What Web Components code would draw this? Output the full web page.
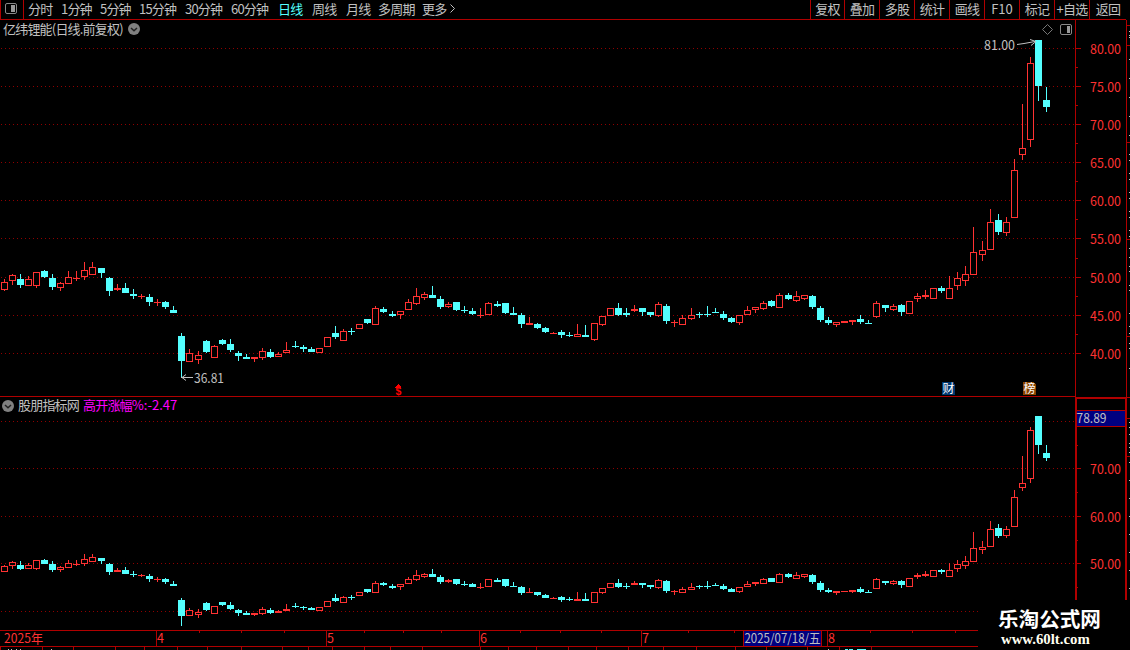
<!DOCTYPE html>
<html lang="zh-CN">
<head>
<meta charset="utf-8">
<title>亿纬锂能 日线</title>
<style>
html, body {
  margin: 0;
  background: #000;
}
body {
  --line: #b00000;
  --dots: #900000;
  --up: #ff3232;
  --down: #54ffff;
  --text: #c0c0c0;
  font: 400 13px/17px "Noto Sans CJK SC", "Liberation Sans", sans-serif;
  letter-spacing: -0.8px;
  color: var(--text);
  overflow: hidden;
}
</style>
</head>
<body>
<stock-terminal></stock-terminal>

<template id="terminal-template">
  <style>
    :host { display: flex; position: relative; width: 1130px; height: 650px; background: #000; }
    main { display: flex; flex-direction: column; width: 1127px; }
    .pane { display: flex; }
    .plot { position: relative; width: 1075px; }
    .number { letter-spacing: 0; }
    pane-title { position: absolute; left: 0; top: 0; }
    site-mark { position: absolute; right: 0; bottom: 0; }
  </style>
  <main>
    <tool-bar>
      <tool-tab style="width:33px">分时</tool-tab>
      <tool-tab style="width:39px">1分钟</tool-tab>
      <tool-tab style="width:39px">5分钟</tool-tab>
      <tool-tab style="width:46px">15分钟</tool-tab>
      <tool-tab style="width:46px">30分钟</tool-tab>
      <tool-tab style="width:47px">60分钟</tool-tab>
      <tool-tab style="width:34px" active>日线</tool-tab>
      <tool-tab style="width:34px">周线</tool-tab>
      <tool-tab style="width:32px">月线</tool-tab>
      <tool-tab style="width:44px">多周期</tool-tab>
      <tool-tab style="width:27px">更多</tool-tab>
      <tool-button slot="end" style="width:33px">复权</tool-button>
      <tool-button slot="end" style="width:34px">叠加</tool-button>
      <tool-button slot="end" style="width:34px">多股</tool-button>
      <tool-button slot="end" style="width:34px">统计</tool-button>
      <tool-button slot="end" style="width:34px">画线</tool-button>
      <tool-button slot="end" style="width:34px"><span class="number">F10</span></tool-button>
      <tool-button slot="end" style="width:34px">标记</tool-button>
      <tool-button slot="end" style="width:34px">+自选</tool-button>
      <tool-button slot="end" style="width:36px">返回</tool-button>
    </tool-bar>
    <div class="pane">
      <div class="plot">
        <candle-chart kind="main"></candle-chart>
        <pane-title><span>亿纬锂能(日线.前复权)</span><drop-dot></drop-dot></pane-title>
      </div>
      <price-axis kind="main"></price-axis>
    </div>
    <div class="pane">
      <div class="plot">
        <candle-chart kind="sub"></candle-chart>
        <pane-title sub><drop-dot></drop-dot><span>股朋指标网</span><span style="color:#ff00ff">高开涨幅<span class="number">%:-2.47</span></span></pane-title>
      </div>
      <price-axis kind="sub"></price-axis>
    </div>
    <time-axis></time-axis>
  </main>
  <side-ruler></side-ruler>
  <site-mark></site-mark>
</template>

<template id="toolbar-template">
  <style>
    :host { display: flex; box-sizing: border-box; height: 20px; width: 1126px; border-bottom: 1px solid var(--line); }
    .panel { box-sizing: border-box; width: 24px; border: solid var(--line); border-width: 0 1px; margin-right: 4px; }
    .end { display: flex; margin-left: auto; }
    svg { display: block; }
  </style>
  <div class="panel">
    <svg width="22" height="19" fill="none">
      <rect x="4.5" y="3.5" width="11" height="10" rx="1.5" stroke="#888"/>
      <rect x="10" y="5" width="4" height="7" fill="#999"/>
    </svg>
  </div>
  <slot></slot>
  <svg width="10" height="19" fill="none"><path d="M1.5 4.5L5.5 8.5L1.5 12.5" stroke="#c0c0c0"/></svg>
  <div class="end"><slot name="end"></slot></div>
</template>

<script>
const template = (id) => document.getElementById(id).content.cloneNode(true);

// Each row: direction, high, body top, body bottom, low (bottoms are exclusive)
const CANDLES = `
r 279 282 290 291|r 274 275 281 285|c 274 279 285 288|r 276 279 286 286|r 272 272 286 288
c 270 271 277 278|c 274 278 287 290|r 282 283 288 291|r 271 277 284 284|r 271 278 279 281
r 262 270 277 280|r 262 267 275 275|c 268 268 273 278|c 277 278 291 296|r 284 288 290 291
c 283 288 293 293|c 289 294 296 299|r 294 296 297 299|c 294 297 302 306|r 299 302 303 306
c 301 302 307 309|c 306 310 313 313|c 333 336 361 378|r 349 353 362 362|r 351 355 360 364
c 340 341 352 353|r 345 346 358 358|c 339 340 344 345|c 339 344 350 352|c 351 353 356 361
c 354 357 359 359|r 357 357 359 362|r 348 351 358 360|c 349 352 357 358|r 352 354 357 357
r 342 350 353 353|c 341 346 347 348|c 345 347 349 352|c 347 349 352 352|r 348 348 353 353
r 337 337 347 347|c 326 333 337 339|r 329 331 341 341|c 328 331 332 335|r 324 324 329 329
c 319 319 323 324|r 306 308 325 325|c 307 309 312 313|c 311 314 316 317|r 311 311 315 319
r 299 302 310 310|r 288 296 304 305|r 292 294 298 300|c 286 295 298 298|c 296 299 307 309
r 302 304 307 308|c 302 302 310 311|c 306 310 311 313|c 308 311 314 315|r 308 315 316 318
r 302 303 315 315|c 301 304 306 307|c 303 303 313 314|c 307 313 315 315|c 313 315 324 328
r 317 323 325 325|c 323 324 328 329|c 327 328 332 333|r 332 333 334 334|c 330 332 335 338
c 332 335 336 337|r 324 334 337 337|c 325 335 337 337|r 323 323 340 341|r 316 316 325 326
r 308 308 316 316|c 303 308 315 316|c 308 313 315 317|r 305 309 311 312|c 308 308 312 316
c 312 312 315 317|r 302 304 316 317|c 304 306 321 324|r 320 322 323 327|r 315 318 325 325
r 308 315 319 320|c 312 314 315 318|c 306 314 315 317|c 308 312 313 313|c 311 314 318 320
c 317 318 322 323|r 315 315 323 325|r 306 310 315 315|r 307 307 310 313|r 301 303 309 310
c 300 301 306 307|r 293 295 308 308|c 293 295 299 300|r 291 296 301 302|r 295 295 299 300
c 295 296 307 309|c 306 308 320 322|c 317 320 323 325|r 322 322 325 327|r 321 321 323 323
r 320 320 322 325|c 315 319 322 324|c 320 323 324 324|r 301 303 317 318|c 305 305 308 312
r 304 306 310 311|c 304 305 312 316|r 301 301 314 314|r 293 296 299 302|r 290 295 297 299
r 288 288 299 299|c 286 288 291 293|r 276 288 299 299|r 272 278 286 290|r 266 274 281 286
r 227 252 275 275|r 241 250 255 261|r 209 222 250 250|c 214 220 232 235|r 217 222 233 236
r 159 170 218 218|r 104 148 155 160|r 57 63 140 147|c 40 40 86 101|c 87 100 107 112
`.trim().split(/[|\n]/).map((row) => {
  const [dir, ...levels] = row.split(" ");
  return [dir, ...levels.map(Number)];
});

const rect = (x, y, w, h, fill) => `<rect x="${x}" y="${y}" width="${w}" height="${h}" fill="${fill}"/>`;
const label = (x, y, w, text, fill) =>
  `<text x="${x}" y="${y}" textLength="${w}" lengthAdjust="spacingAndGlyphs" fill="${fill}">${text}</text>`;

const PANES = {
  main: {
    top: 20, height: 377,
    grid: [48, 86, 124, 162, 200, 238, 277, 315, 353],
    minor: [67, 105, 143, 181, 219, 258, 296, 334],
    labels: ["80.00", "75.00", "70.00", "65.00", "60.00", "55.00", "50.00", "45.00", "40.00"],
    scale: (y) => y,
  },
  sub: {
    top: 397, height: 233,
    grid: [421, 468, 516, 563, 611],
    minor: [445, 492, 540, 587],
    labels: ["", "70.00", "60.00", "50.00"],
    scale: (y) => Math.round(421 + (y - 48) * 0.6213),
  },
};

const SVG_STYLE = `
  :host { display: block; }
  svg { display: block; overflow: visible; shape-rendering: crispEdges; }
  text { font-size: 12.6px; letter-spacing: 0; }
`;

class StockTerminal extends HTMLElement {
  constructor() {
    super();
    this.attachShadow({ mode: "open" });
    this.shadowRoot.appendChild(template("terminal-template"));
  }
}

class ToolBar extends HTMLElement {
  constructor() {
    super();
    this.attachShadow({ mode: "open" });
    this.shadowRoot.appendChild(template("toolbar-template"));
  }
}

class ToolTab extends HTMLElement {
  constructor() {
    super();
    this.attachShadow({ mode: "open" }).innerHTML = `
      <style>
        :host { display: block; white-space: nowrap; }
        :host([active]) { color: var(--down); }
      </style>
      <slot></slot>`;
  }
}

class ToolButton extends HTMLElement {
  constructor() {
    super();
    this.attachShadow({ mode: "open" }).innerHTML = `
      <style>
        :host { display: block; height: 19px; border-left: 1px solid var(--line); text-align: center; white-space: nowrap; }
      </style>
      <slot></slot>`;
  }
}

class DropDot extends HTMLElement {
  constructor() {
    super();
    this.attachShadow({ mode: "open" }).innerHTML = `
      <style>:host, svg { display: block; }</style>
      <svg width="12" height="12" fill="none">
        <circle cx="6" cy="6" r="6" fill="#808080"/>
        <path d="M3 5L6 7.7L9 5" stroke="#202020" stroke-width="1.5"/>
      </svg>`;
  }
}

class PaneTitle extends HTMLElement {
  constructor() {
    super();
    this.attachShadow({ mode: "open" }).innerHTML = `
      <style>
        :host { display: flex; align-items: center; gap: 5px; height: 18px; padding-left: 3px; white-space: nowrap; }
        :host([sub]) { gap: 4px; height: 17px; padding-left: 2px; }
        ::slotted(span) { margin-top: -2px; }
      </style>
      <slot></slot>`;
  }
}

class CandleChart extends HTMLElement {
  connectedCallback() {
    const kind = this.getAttribute("kind");
    const pane = PANES[kind];
    this.attachShadow({ mode: "open" }).innerHTML = `
      <style>${SVG_STYLE}</style>
      <svg width="1075" height="${pane.height}" viewBox="0 ${pane.top} 1075 ${pane.height}">
        ${pane.grid.map((y) => `<path d="M1 ${y + 0.5}H1075" stroke="var(--dots)" stroke-dasharray="1 3"/>`).join("")}
        ${CANDLES.map((candle, i) => this.drawCandle(candle, i, pane.scale)).join("")}
        ${kind === "main" ? this.drawMarks() : ""}
      </svg>`;
  }

  drawCandle([dir, high, top, bottom, low], i, scale) {
    const x = 1 + 8 * i + Math.floor(0.0822 * i + 0.06);
    const h = scale(high);
    const t = scale(top);
    const b = scale(bottom - 1) + 1;
    const l = scale(low - 1) + 1;
    const color = dir === "r" ? "var(--up)" : "var(--down)";
    let out = rect(x + 3, h, 1, t - h, color) + rect(x + 3, b, 1, l - b, color);
    if (dir === "r" && b - t > 2) {
      out += rect(x, t, 7, b - t, color) + rect(x + 1, t + 1, 5, b - t - 2, "#000");
    } else {
      out += rect(x, t, 7, b - t, color);
    }
    return out;
  }

  drawMarks() {
    return `
      ${rect(0, 396, 1075, 1, "var(--line)")}
      <g fill="none" stroke="#c0c0c0" shape-rendering="auto">
        <path d="M1017 44.5L1024 43.5L1035 41.5M1030 39.5L1036 41.5L1031 45.5"/>
        <path d="M181 377.5H193M186 374.5L182 377.5L186 380.5"/>
        <path d="M1047.5 24.5L1052.5 29.5L1047.5 34.5L1042.5 29.5Z" stroke="#777"/>
        <rect x="1060.5" y="24.5" width="11" height="10" rx="1.5" stroke="#888"/>
      </g>
      ${rect(1067, 26, 3, 7, "#999")}
      ${label(984, 50, 31, "81.00", "var(--text)")}
      ${label(194, 383, 30, "36.81", "var(--text)")}
      <path d="M395.5 387.5L398.5 384L401.5 387.5Z" fill="#f00"/>
      <text x="395.5" y="395" fill="#f00" style="font:bold 10.5px 'Liberation Sans',sans-serif">$</text>
      ${rect(942, 382, 12, 13, "#003870")}${rect(954, 384, 1, 11, "#003870")}
      <text x="942.5" y="393.3" fill="#fff" style="font-size:12px">财</text>
      ${rect(1023, 382, 11, 13, "#8a4400")}${rect(1034, 384, 2, 11, "#8a4400")}
      <text x="1023.5" y="393.3" fill="#fff" style="font-size:12px">榜</text>`;
  }
}

class PriceAxis extends HTMLElement {
  connectedCallback() {
    const kind = this.getAttribute("kind");
    const pane = PANES[kind];
    const frame = kind === "main"
      ? rect(0, 20, 1, 377, "var(--line)") + rect(51, 20, 1, 377, "var(--line)")
      : rect(0, 397, 52, 2, "var(--line)") + rect(0, 397, 2, 233, "var(--line)") + rect(50, 397, 2, 233, "var(--line)")
        + rect(2, 410, 48, 17, "var(--line)") + rect(2, 411, 48, 15, "#000080")
        + label(1.5, 422.5, 30, "78.89", "var(--text)");
    this.attachShadow({ mode: "open" }).innerHTML = `
      <style>${SVG_STYLE}</style>
      <svg width="52" height="${pane.height}" viewBox="0 ${pane.top} 52 ${pane.height}">
        ${frame}
        ${pane.labels.map((text, i) => text
          ? rect(1, pane.grid[i], 5, 1, "var(--line)") + label(15, pane.grid[i] + 5.5, 31, text, "var(--up)")
          : "").join("")}
        ${pane.minor.map((y) => rect(1, y, 2, 1, "var(--line)")).join("")}
      </svg>`;
  }
}

class TimeAxis extends HTMLElement {
  constructor() {
    super();
    const months = [[156, "4"], [326, "5"], [479, "6"], [641, "7"], [827, "8"]];
    const weeks = [199, 241, 284, 364, 403, 441, 520, 560, 601, 688, 734, 870, 912, 955];
    const lower = [0, 42, 73, 115, 144, 177, 207, 241, 282, 308, 332, 364, 390, 422, 480, 508, 536,
      568, 596, 628, 663, 696, 735, 766, 807, 839, 871];
    this.attachShadow({ mode: "open" }).innerHTML = `
      <style>${SVG_STYLE}</style>
      <svg width="978" height="20" viewBox="0 630 978 20">
        ${rect(0, 630, 978, 1, "var(--line)")}
        ${rect(0, 646, 978, 1, "var(--line)")}
        ${weeks.map((x) => rect(x, 631, 1, 2, "var(--line)")).join("")}
        ${lower.map((x) => rect(x, 647, 1, 3, "var(--line)")).join("")}
        ${months.map(([x, m]) => rect(x, 631, 1, 15, "var(--line)") + label(x + 1, 643, 7, m, "var(--up)")).join("")}
        ${label(4, 643, 39, "2025年", "var(--up)")}
        ${rect(743, 631, 79, 15, "var(--line)")}
        ${rect(744, 631, 77, 15, "#000080")}
        ${label(744.5, 642.5, 76, "2025/07/18/五", "var(--text)")}
        ${[8, 11, 16, 20, 51, 828].map((x) => rect(x, 649, 1, 1, "var(--text)")).join("")}
        ${rect(845, 649, 3, 1, "var(--down)")}${rect(849, 649, 4, 1, "var(--down)")}${rect(857, 649, 9, 1, "var(--down)")}
      </svg>`;
  }
}

class SideRuler extends HTMLElement {
  constructor() {
    super();
    const red = [25, 45, 142, 239, 336, 397, 418, 456];
    const white = [31, 35, 37, 59, 78, 97, 116, 135, 154, 160, 173, 179, 192, 198, 211, 217, 230, 236,
      248, 257, 266, 271, 285, 290, 313, 326, 333, 343, 348, 368, 422, 427, 434, 443, 447, 452,
      462, 480, 498, 516, 534, 552, 570, 588];
    this.attachShadow({ mode: "open" }).innerHTML = `
      <style>${SVG_STYLE}</style>
      <svg width="3" height="650">
        ${red.map((y) => rect(0, y, 3, 1, "var(--line)")).join("")}
        ${white.map((y) => rect(2, y, 1, 1, "var(--text)")).join("")}
      </svg>`;
  }
}

class SiteMark extends HTMLElement {
  constructor() {
    super();
    this.attachShadow({ mode: "open" }).innerHTML = `
      <style>
        :host { display: flex; flex-direction: column; box-sizing: border-box; width: 152px; height: 50px;
          padding: 4px 0 0 20px; background: #000; color: #fff; letter-spacing: 0; }
        b { font-weight: 700; font-size: 20.6px; line-height: 28px; height: 27px; }
        span { font: bold 14.8px/16px "Liberation Serif", serif; padding-left: 3px; color: #fffff0; }
      </style>
      <b>乐淘公式网</b>
      <span>www.60lt.com</span>`;
  }
}

customElements.define("stock-terminal", StockTerminal);
customElements.define("tool-bar", ToolBar);
customElements.define("tool-tab", ToolTab);
customElements.define("tool-button", ToolButton);
customElements.define("drop-dot", DropDot);
customElements.define("pane-title", PaneTitle);
customElements.define("candle-chart", CandleChart);
customElements.define("price-axis", PriceAxis);
customElements.define("time-axis", TimeAxis);
customElements.define("side-ruler", SideRuler);
customElements.define("site-mark", SiteMark);
</script>
</body>
</html>
